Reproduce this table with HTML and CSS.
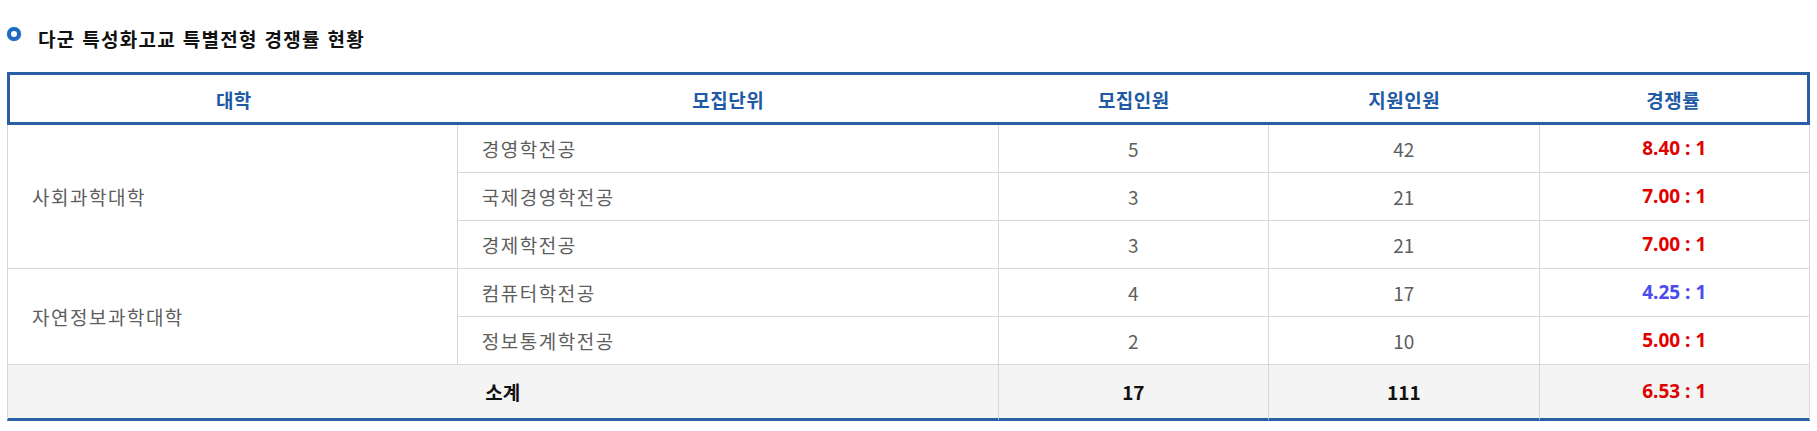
FILE: index.html
```html
<!DOCTYPE html>
<html lang="ko">
<head>
<meta charset="utf-8">
<title>다군 특성화고교 특별전형 경쟁률 현황</title>
<link rel="stylesheet" href="styles.css">
</head>
<body>
<div class="wrap">
  <h2 class="title"><span class="bullet"></span>다군 특성화고교 특별전형 경쟁률 현황</h2>
  <table class="rate-table">
    <colgroup>
      <col class="c-college"><col class="c-unit"><col class="c-num"><col class="c-num"><col class="c-num">
    </colgroup>
    <thead>
      <tr>
        <th>대학</th>
        <th>모집단위</th>
        <th>모집인원</th>
        <th>지원인원</th>
        <th>경쟁률</th>
      </tr>
    </thead>
    <tbody>
      <tr>
        <td class="college" rowspan="3">사회과학대학</td>
        <td class="unit">경영학전공</td>
        <td>5</td><td>42</td><td class="rate red">8.40 : 1</td>
      </tr>
      <tr>
        <td class="unit">국제경영학전공</td>
        <td>3</td><td>21</td><td class="rate red">7.00 : 1</td>
      </tr>
      <tr>
        <td class="unit">경제학전공</td>
        <td>3</td><td>21</td><td class="rate red">7.00 : 1</td>
      </tr>
      <tr>
        <td class="college" rowspan="2">자연정보과학대학</td>
        <td class="unit">컴퓨터학전공</td>
        <td>4</td><td>17</td><td class="rate blue">4.25 : 1</td>
      </tr>
      <tr>
        <td class="unit">정보통계학전공</td>
        <td>2</td><td>10</td><td class="rate red">5.00 : 1</td>
      </tr>
    </tbody>
    <tfoot>
      <tr>
        <td colspan="2" class="sum-label">소계</td>
        <td class="sum">17</td><td class="sum">111</td><td class="rate red">6.53 : 1</td>
      </tr>
    </tfoot>
  </table>
</div>
</body>
</html>
```

FILE: styles.css
```css
html, body {
  margin: 0;
  padding: 0;
  background: #fff;
}
body {
  font-family: "Noto Sans CJK KR", "Noto Sans", sans-serif;
  color: #5e5e5e;
}
.wrap {
  padding: 27px 7px 0 7px;
}
.title {
  display: flex;
  align-items: flex-start;
  margin: 0 0 21px 0;
  font-size: 19px;
  font-weight: 700;
  letter-spacing: 1.3px;
  line-height: 24px;
  color: #111;
}
.bullet {
  flex: none;
  box-sizing: border-box;
  width: 14px;
  height: 14px;
  border-radius: 50%;
  border: 4px solid #1f6cbf;
  background: #fff;
  margin-right: 17px;
  box-shadow: 0 0 1px #5d97d6;
}
.rate-table {
  width: 100%;
  border-collapse: separate;
  border-spacing: 0;
  table-layout: fixed;
  font-size: 19px;
}
.c-college { width: 25%; }
.c-unit { width: 30%; }
.c-num { width: 15%; }

.rate-table th {
  padding: 2px 0 0 0;
  height: 45px;
  line-height: 45px;
  font-weight: 700;
  letter-spacing: 0.5px;
  color: #1f5aa5;
  text-align: center;
  border-top: 3px solid #2a5fa6;
  border-bottom: 3px solid #2a5fa6;
}
.rate-table th:first-child { border-left: 3px solid #2a5fa6; }
.rate-table th:last-child { border-right: 3px solid #2a5fa6; }

.rate-table td {
  padding: 0;
  height: 47px;
  line-height: 47px;
  text-align: center;
  border-right: 1px solid #d8d8d8;
  border-bottom: 1px solid #d8d8d8;
}
.rate-table tbody tr td:first-child,
.rate-table tfoot tr td:first-child {
  border-left: 1px solid #d8d8d8;
}
.rate-table tbody tr:nth-child(2) td:first-child,
.rate-table tbody tr:nth-child(3) td:first-child,
.rate-table tbody tr:nth-child(5) td:first-child {
  border-left: none;
}
.rate-table td.college,
.rate-table td.unit {
  text-align: left;
  padding-left: 24px;
  letter-spacing: 1.5px;
}
.rate-table td.rate {
  font-family: "Noto Sans", "Noto Sans CJK KR", sans-serif;
  font-size: 19px;
  font-weight: 700;
}
.red { color: #e00000; }
.blue { color: #4b4bf0; }

.rate-table tfoot td {
  background: #f4f4f4;
  height: 53px;
  line-height: 53px;
  border-bottom: 3px solid #2a5fa6;
  font-weight: 700;
  color: #111;
}
.rate-table tfoot td.rate { color: #e00000; }
```
